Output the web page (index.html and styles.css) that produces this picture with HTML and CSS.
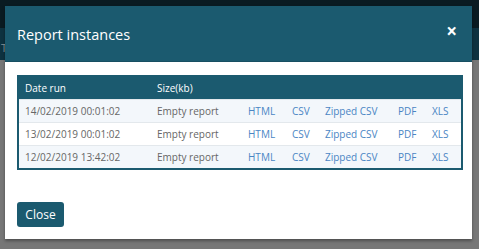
FILE: index.html
```html
<!DOCTYPE html>
<html lang="en">
<head>
    <meta charset="UTF-8">
    <title>Report instances</title>
    <link rel="stylesheet" href="styles.css">
</head>
<body>
    <div class="page">
        <div class="topbar"></div>
        <div class="navbar"><span>T</span></div>
        <div class="content"></div>
    </div>

    <div class="modal">
        <div class="modal-header">
            <h2>Report instances</h2>
            <span class="close-x">&times;</span>
        </div>
        <div class="modal-body">
            <table class="instances">
                <colgroup>
                    <col class="c-date">
                    <col class="c-size">
                    <col class="c-html">
                    <col class="c-csv">
                    <col class="c-zip">
                    <col class="c-pdf">
                    <col class="c-xls">
                </colgroup>
                <thead>
                    <tr>
                        <th>Date run</th>
                        <th>Size(kb)</th>
                        <th></th><th></th><th></th><th></th><th></th>
                    </tr>
                </thead>
                <tbody>
                    <tr>
                        <td>14/02/2019 00:01:02</td>
                        <td>Empty report</td>
                        <td><a href="#">HTML</a></td>
                        <td><a href="#">CSV</a></td>
                        <td><a href="#">Zipped CSV</a></td>
                        <td><a href="#">PDF</a></td>
                        <td><a href="#">XLS</a></td>
                    </tr>
                    <tr>
                        <td>13/02/2019 00:01:02</td>
                        <td>Empty report</td>
                        <td><a href="#">HTML</a></td>
                        <td><a href="#">CSV</a></td>
                        <td><a href="#">Zipped CSV</a></td>
                        <td><a href="#">PDF</a></td>
                        <td><a href="#">XLS</a></td>
                    </tr>
                    <tr>
                        <td>12/02/2019 13:42:02</td>
                        <td>Empty report</td>
                        <td><a href="#">HTML</a></td>
                        <td><a href="#">CSV</a></td>
                        <td><a href="#">Zipped CSV</a></td>
                        <td><a href="#">PDF</a></td>
                        <td><a href="#">XLS</a></td>
                    </tr>
                </tbody>
            </table>
        </div>
        <div class="modal-footer">
            <button class="btn-close">Close</button>
        </div>
    </div>
</body>
</html>
```

FILE: styles.css
```css
body {
    margin: 0;
    padding: 0;
    font-family: "Open Sans", Arial, sans-serif;
    background-color: #777;
    width: 479px;
    height: 249px;
    overflow: hidden;
    position: relative;
}
.topbar {
    height: 28px;
    background-color: #0a1b22;
}
.navbar {
    height: 32px;
    background-color: #0e3240;
    color: #8a9599;
    font-size: 11px;
    line-height: 40px;
    padding-left: 1px;
}
.content {
    height: 189px;
    background-color: #777;
}

.modal {
    position: absolute;
    left: 5px;
    top: 6px;
    width: 467px;
    height: 233px;
    background-color: #fff;
    box-shadow: 0 2px 3px rgba(0, 0, 0, 0.35);
    display: flex;
    flex-direction: column;
}
.modal-header {
    height: 56px;
    background-color: #1b5a6f;
    color: #fff;
    display: flex;
    align-items: center;
    justify-content: space-between;
    padding: 0 12px;
    border-bottom: 1px solid #174f62;
    box-sizing: border-box;
}
.modal-header h2 {
    margin: 0;
    font-size: 14.5px;
    font-weight: normal;
    padding-top: 1px;
}
.close-x {
    font-size: 19px;
    font-weight: bold;
    line-height: 1;
    margin-top: -4px;
    margin-right: 3px;
}
.modal-body {
    padding: 13px 11px 0 12px;
}
.instances {
    width: 444px;
    border-collapse: collapse;
    border: 2px solid #1b5a6f;
    font-size: 10px;
    table-layout: fixed;
}
.c-date { width: 133px; }
.c-size { width: 97px; }
.c-html { width: 44px; }
.c-csv { width: 33px; }
.c-zip { width: 73px; }
.c-pdf { width: 34px; }
.c-xls { width: 30px; }
.instances th {
    background-color: #1b5a6f;
    color: #fff;
    font-weight: normal;
    text-align: left;
    height: 22px;
    padding: 0 0 0 6px;
}
.instances td {
    color: #666;
    height: 22px;
    padding: 0 0 0 6px;
    border-top: 1px solid #e3e8ec;
    white-space: nowrap;
}
.instances td:nth-child(n+3) {
    padding-left: 0;
}
.instances tbody tr:nth-child(odd) {
    background-color: #f3f7fb;
}
.instances a {
    color: #4a85c4;
    text-decoration: none;
}
.modal-footer {
    padding: 32px 12px 0;
}
.btn-close {
    background-color: #1b5a6f;
    color: #fff;
    border: none;
    border-radius: 3px;
    font-family: "Open Sans", Arial, sans-serif;
    font-size: 12px;
    width: 47px;
    height: 25px;
    padding: 0;
}
```
